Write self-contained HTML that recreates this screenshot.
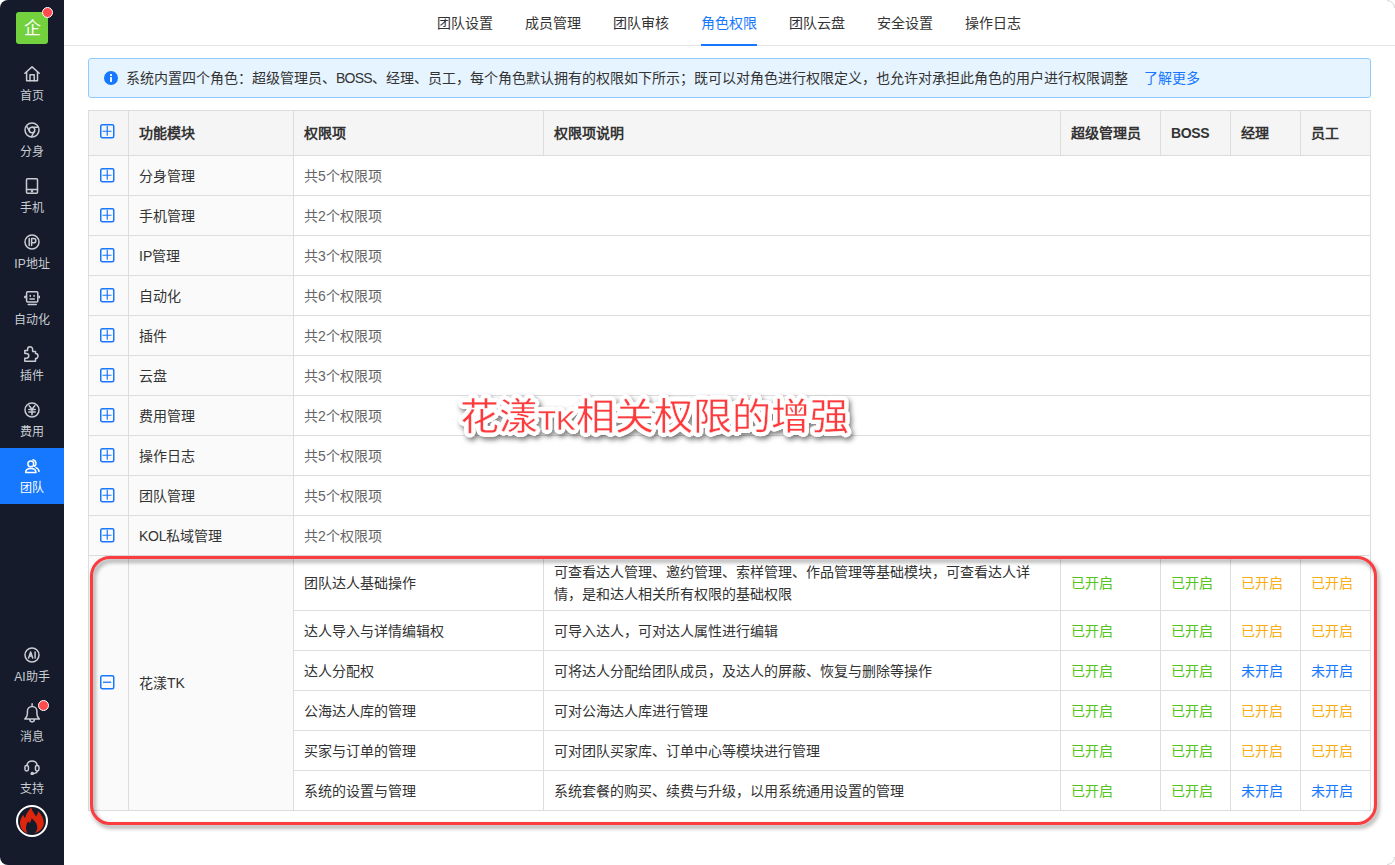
<!DOCTYPE html>
<html lang="zh-CN">
<head>
<meta charset="utf-8">
<style>
*{box-sizing:border-box;margin:0;padding:0}
html,body{width:1395px;height:865px;overflow:hidden;background:#fff}
body{font-family:"Liberation Sans",sans-serif;font-size:14px;color:#333;position:relative}
.abs{position:absolute}
/* sidebar */
#side{position:absolute;left:0;top:0;width:64px;height:865px;background:#151b2a;border-radius:8px 0 0 8px}
.logo{position:absolute;left:16px;top:12px;width:32px;height:32px;background:#72d13c;border-radius:3px;color:#fff;font-size:17px;line-height:34px;text-align:center}
.dot{position:absolute;width:11px;height:11px;border-radius:50%;background:#ff4d4f;border:1px solid #fff}
.item{position:absolute;left:0;width:64px;height:56px}
.item svg{position:absolute;left:24px;top:10px;width:16px;height:16px}
.item .lb{position:absolute;left:0;width:64px;top:32px;text-align:center;font-size:12px;line-height:16px;color:#c9cdd4}
.item.act{background:#1677ff}
.item.act .lb{color:#fff}
/* top nav */
#nav{position:absolute;left:64px;top:0;right:0;height:46px;border-bottom:1px solid #e8e8e8}
.tab{position:absolute;top:13px;font-size:14px;line-height:20px;color:#333;white-space:nowrap}
.tab.on{color:#1677ff}
.uline{position:absolute;left:701px;top:44px;width:56px;height:2px;background:#1677ff}
/* banner */
#banner{position:absolute;left:88px;top:58px;width:1283px;height:40px;background:#e6f4ff;border:1px solid #91caff;border-radius:3px}
.ico-i{position:absolute;left:104px;top:71px;width:14px;height:14px;border-radius:50%;background:#1677ff}
.ico-i:before{content:"";position:absolute;left:6.2px;top:3px;width:1.6px;height:1.6px;background:#e8f1ff}
.ico-i:after{content:"";position:absolute;left:6.2px;top:5.5px;width:1.6px;height:5.5px;background:#e8f1ff}
.btxt{position:absolute;left:126px;top:68px;line-height:20px;white-space:nowrap;color:#333}
.blink{position:absolute;left:1144px;top:68px;line-height:20px;color:#1677ff;white-space:nowrap}
/* table */
.hl{position:absolute;height:1px;background:#ddd}
.vl{position:absolute;width:1px;background:#ddd}
.bg{position:absolute}
.t{position:absolute;white-space:nowrap;line-height:20px}
.th{font-weight:bold;color:#333}
.mod{color:#333}
.cnt{color:#666}
.pi{color:#333}
.ds{color:#333}
.g{color:#52c41a}
.o{color:#faad14}
.b{color:#1677ff}
.ex{position:absolute;left:99px}
.exp{position:absolute;left:100px;width:15px;height:15px;border:1.5px solid #1677ff;border-radius:1.5px}
.exp:before{content:"";position:absolute;left:2px;top:5.25px;width:8px;height:1.5px;background:#1677ff}
.exp.plus:after{content:"";position:absolute;left:5.25px;top:2px;width:1.5px;height:8px;background:#1677ff}
/* annotation */
.annow{position:absolute;left:0;top:0;filter:drop-shadow(2px 3px 2.5px rgba(0,0,0,.5))}
.anno{position:absolute;left:460px;top:392px;font-size:39px;-webkit-text-stroke:0.35px #fff;line-height:54px;color:#fd3b3d;white-space:nowrap;font-weight:300;transform:scaleY(.95);transform-origin:0 0;text-shadow:4.00px 0.00px 0 #fff,3.86px 1.04px 0 #fff,3.46px 2.00px 0 #fff,2.83px 2.83px 0 #fff,2.00px 3.46px 0 #fff,1.04px 3.86px 0 #fff,0.00px 4.00px 0 #fff,-1.04px 3.86px 0 #fff,-2.00px 3.46px 0 #fff,-2.83px 2.83px 0 #fff,-3.46px 2.00px 0 #fff,-3.86px 1.04px 0 #fff,-4.00px 0.00px 0 #fff,-3.86px -1.04px 0 #fff,-3.46px -2.00px 0 #fff,-2.83px -2.83px 0 #fff,-2.00px -3.46px 0 #fff,-1.04px -3.86px 0 #fff,-0.00px -4.00px 0 #fff,1.04px -3.86px 0 #fff,2.00px -3.46px 0 #fff,2.83px -2.83px 0 #fff,3.46px -2.00px 0 #fff,3.86px -1.04px 0 #fff,2.50px 0.00px 0 #fff,2.17px 1.25px 0 #fff,1.25px 2.17px 0 #fff,0.00px 2.50px 0 #fff,-1.25px 2.17px 0 #fff,-2.17px 1.25px 0 #fff,-2.50px 0.00px 0 #fff,-2.17px -1.25px 0 #fff,-1.25px -2.17px 0 #fff,-0.00px -2.50px 0 #fff,1.25px -2.17px 0 #fff,2.17px -1.25px 0 #fff,0 0 1px #fff}
.anno .tk{font-size:29.5px;-webkit-text-stroke:0.3px #fff}
.redbox{position:absolute;left:90px;top:556px;width:1287px;height:269px;border:3px solid #fb3d3f;border-radius:20px;filter:drop-shadow(2px 3px 2px rgba(0,0,0,.42))}
</style>
</head>
<body>
<div id="side">
<div class="logo">企</div><div class="dot" style="left:42px;top:7px"></div>
<div class="item" style="top:56px"><svg viewBox="0 0 16 16" fill="none" stroke="#c9cdd4" stroke-width="1.5" stroke-linecap="round" stroke-linejoin="round"><path d="M0.9 7.3 8.05 0.9l7.15 6.4"/><path d="M2.6 6V14.7H13.5V6"/><path d="M6 14.7V8.8h4.2v5.9"/></svg><div class="lb">首页</div></div>
<div class="item" style="top:112px"><svg viewBox="0 0 16 16" fill="none" stroke="#c9cdd4" stroke-width="1.5" stroke-linecap="round" stroke-linejoin="round"><circle cx="8" cy="8" r="7"/><circle cx="8" cy="8" r="2.8"/><path d="M8 5.2h6.2M5.6 9.4 2.6 4.2M10.4 9.4 7.4 14.8"/></svg><div class="lb">分身</div></div>
<div class="item" style="top:168px"><svg viewBox="0 0 16 16" fill="none" stroke="#c9cdd4" stroke-width="1.5" stroke-linecap="round" stroke-linejoin="round"><rect x="2.5" y="0.8" width="11" height="14.4" rx="1"/><path d="M2.5 11.5h11"/><circle cx="8" cy="13.3" r=".5" fill="#c9cdd4"/></svg><div class="lb">手机</div></div>
<div class="item" style="top:224px"><svg viewBox="0 0 16 16" fill="none" stroke="#c9cdd4" stroke-width="1.5" stroke-linecap="round" stroke-linejoin="round"><circle cx="8" cy="8" r="7"/><path d="M5.2 4.6v6.8M7.6 11.4V4.6h2.1a2 2 0 0 1 0 4.2H7.6"/></svg><div class="lb">IP地址</div></div>
<div class="item" style="top:280px"><svg viewBox="0 0 16 16" fill="none" stroke="#c9cdd4" stroke-width="1.5" stroke-linecap="round" stroke-linejoin="round"><rect x="2.6" y="1.8" width="11.2" height="10.2" rx="1"/><path d="M1.3 6.2.6 7l.7.8M15.1 6.2l.7.8-.7.8M6.3 5.6v.6M10.1 5.6v.6M6 9h4.4M4.2 14.4h8"/></svg><div class="lb">自动化</div></div>
<div class="item" style="top:336px"><svg viewBox="0 0 16 16" fill="none" stroke="#c9cdd4" stroke-width="1.5" stroke-linecap="round" stroke-linejoin="round"><path d="M0.8 4.6H3.6V3.3A2.5 2.5 0 0 1 8.6 3.3V5.4H11.5V7.6A2.5 2.5 0 0 1 11.5 12.6V15.2H0.8V12.2H2.4A2.4 2.4 0 0 0 2.4 7.4H0.8Z"/></svg><div class="lb">插件</div></div>
<div class="item" style="top:392px"><svg viewBox="0 0 16 16" fill="none" stroke="#c9cdd4" stroke-width="1.5" stroke-linecap="round" stroke-linejoin="round"><circle cx="8" cy="8" r="7"/><path d="M5.2 3.8 8 7.2l2.8-3.4M8 7.2v5.5M4.8 7.5h6.4M4.8 9.9h6.4"/></svg><div class="lb">费用</div></div>
<div class="item act" style="top:448px"><svg viewBox="0 0 16 16" fill="none" stroke="#fff" stroke-width="1.5" stroke-linecap="round" stroke-linejoin="round"><circle cx="6.8" cy="5.9" r="2.9"/><path d="M1.6 14.6C1.6 12 3.9 10.4 6.8 10.4S12 12 12 14.6Z"/><path d="M9 1.8A3.6 3.6 0 0 1 10.6 8.2M11.9 9.6C13.6 10.3 15 11.6 15 13.6"/></svg><div class="lb">团队</div></div>
<div class="item" style="top:637px"><svg viewBox="0 0 16 16" fill="none" stroke="#c9cdd4" stroke-width="1.5" stroke-linecap="round" stroke-linejoin="round"><circle cx="8" cy="8" r="7"/><path d="M4.6 11 6.65 5 8.7 11M5.3 9.1h2.7M11.1 5v6" stroke-width="1.5"/></svg><div class="lb">AI助手</div></div>
<div class="item" style="top:697px"><svg style="top:6px;height:20px" viewBox="0 0 16 20" fill="none" stroke="#c9cdd4" stroke-width="1.5" stroke-linecap="round" stroke-linejoin="round"><path d="M8.1 0.8v2M0.8 16.1C2.6 14.4 3.4 13 3.4 10.8V8.2A4.75 4.75 0 0 1 12.9 8.2V10.8C12.9 13 13.6 14.4 15.4 16.1Z"/><path d="M5.8 16.6A2.3 2.3 0 0 0 10.4 16.6"/></svg><div class="lb">消息</div><div class="dot" style="left:37.5px;top:3px"></div></div>
<div class="item" style="top:749px"><svg viewBox="0 0 16 16" fill="none" stroke="#c9cdd4" stroke-width="1.5" stroke-linecap="round" stroke-linejoin="round"><path d="M2.9 6.4A5.2 5.2 0 0 1 13.2 6.4"/><rect x="0.95" y="6.45" width="3.5" height="5.5" rx="1.6"/><rect x="11.45" y="6.45" width="3.5" height="5.5" rx="1.6"/><path d="M13.4 12.2C13 13.9 11.3 14.6 8.6 14.6"/><circle cx="8.2" cy="14.6" r="1" fill="#c9cdd4"/></svg><div class="lb">支持</div></div>
<div class="abs" style="left:16px;top:805px;width:32px;height:32px;border:2px solid #fff;border-radius:50%;overflow:hidden"><svg viewBox="0 0 28 28" width="28" height="28" style="position:absolute;left:0;top:0"><path fill="#dc260e" d="M13.2 0.2C14 4 16.5 6.5 18 9.5C19.2 8 19.9 6 20.1 4.2C23.5 7.5 25.8 11.5 25.8 16C25.8 20.5 22 24.5 16.7 26.4C18.6 24.5 19.5 22 19.2 19.5C18.8 16 16.2 13.2 13.6 11.2C13.6 13 12.8 14.5 11.7 16C11.2 15.5 10.6 14.9 10.2 14.2C8.8 16.5 8 18.5 8 21C8 23 8.7 25 9.7 26.4C5 24.8 2 20.8 2 16C2 13 3.5 10 5.4 7.7C5.6 9 6.2 10.2 7.3 11C7.8 6.5 11 3.5 13.2 0.2Z"/></svg></div>
</div>
<div class="abs" style="left:64px;top:45px;width:1331px;height:1px;background:#e5e5e5"></div>
<div class="tab" style="left:437px">团队设置</div>
<div class="tab" style="left:525px">成员管理</div>
<div class="tab" style="left:613px">团队审核</div>
<div class="tab on" style="left:701px">角色权限</div>
<div class="tab" style="left:789px">团队云盘</div>
<div class="tab" style="left:877px">安全设置</div>
<div class="tab" style="left:965px">操作日志</div>
<div class="uline"></div>
<div id="banner"></div><div class="ico-i"></div>
<div class="btxt">系统内置四个角色：超级管理员、<span style="letter-spacing:-.8px">BOSS</span>、经理、员工，每个角色默认拥有的权限如下所示；既可以对角色进行权限定义，也允许对承担此角色的用户进行权限调整</div>
<div class="blink">了解更多</div>
<div class="bg" style="left:88px;top:110px;width:1282px;height:45px;background:#f5f5f5"></div>
<div class="bg" style="left:88px;top:155px;width:205px;height:655px;background:#fafafa"></div>
<div class="hl" style="left:88px;top:110px;width:1283px"></div>
<div class="hl" style="left:88px;top:155px;width:1283px"></div>
<div class="hl" style="left:88px;top:195px;width:1283px"></div>
<div class="hl" style="left:88px;top:235px;width:1283px"></div>
<div class="hl" style="left:88px;top:275px;width:1283px"></div>
<div class="hl" style="left:88px;top:315px;width:1283px"></div>
<div class="hl" style="left:88px;top:355px;width:1283px"></div>
<div class="hl" style="left:88px;top:395px;width:1283px"></div>
<div class="hl" style="left:88px;top:435px;width:1283px"></div>
<div class="hl" style="left:88px;top:475px;width:1283px"></div>
<div class="hl" style="left:88px;top:515px;width:1283px"></div>
<div class="hl" style="left:88px;top:555px;width:1283px"></div>
<div class="hl" style="left:293px;top:610px;width:1078px"></div>
<div class="hl" style="left:293px;top:650px;width:1078px"></div>
<div class="hl" style="left:293px;top:690px;width:1078px"></div>
<div class="hl" style="left:293px;top:730px;width:1078px"></div>
<div class="hl" style="left:293px;top:770px;width:1078px"></div>
<div class="hl" style="left:88px;top:810px;width:1283px"></div>
<div class="vl" style="left:88px;top:110px;height:701px"></div>
<div class="vl" style="left:128px;top:110px;height:701px"></div>
<div class="vl" style="left:293px;top:110px;height:701px"></div>
<div class="vl" style="left:1370px;top:110px;height:701px"></div>
<div class="vl" style="left:543px;top:110px;height:46px"></div>
<div class="vl" style="left:543px;top:555px;height:256px"></div>
<div class="vl" style="left:1060px;top:110px;height:46px"></div>
<div class="vl" style="left:1060px;top:555px;height:256px"></div>
<div class="vl" style="left:1160px;top:110px;height:46px"></div>
<div class="vl" style="left:1160px;top:555px;height:256px"></div>
<div class="vl" style="left:1230px;top:110px;height:46px"></div>
<div class="vl" style="left:1230px;top:555px;height:256px"></div>
<div class="vl" style="left:1300px;top:110px;height:46px"></div>
<div class="vl" style="left:1300px;top:555px;height:256px"></div>
<div class="t th" style="left:139px;top:123px">功能模块</div>
<div class="t th" style="left:304px;top:123px">权限项</div>
<div class="t th" style="left:554px;top:123px">权限项说明</div>
<div class="t th" style="left:1071px;top:123px">超级管理员</div>
<div class="t th" style="left:1171px;top:123px"><span style="letter-spacing:-.4px">BOSS</span></div>
<div class="t th" style="left:1241px;top:123px">经理</div>
<div class="t th" style="left:1311px;top:123px">员工</div>
<svg class="ex" style="top:123px" width="16" height="16" viewBox="0 0 16 16" fill="none" stroke="#1677ff"><rect x="1.75" y="1.75" width="13" height="13" rx="1.5" stroke-width="1.5"/><path d="M3.5 8.25h9M8.25 3v9.7" stroke-width="1.2"/></svg>
<svg class="ex" style="top:167px" width="16" height="16" viewBox="0 0 16 16" fill="none" stroke="#1677ff"><rect x="1.75" y="1.75" width="13" height="13" rx="1.5" stroke-width="1.5"/><path d="M3.5 8.25h9M8.25 3v9.7" stroke-width="1.2"/></svg>
<div class="t mod" style="left:139px;top:166px">分身管理</div>
<div class="t cnt" style="left:304px;top:166px">共5个权限项</div>
<svg class="ex" style="top:207px" width="16" height="16" viewBox="0 0 16 16" fill="none" stroke="#1677ff"><rect x="1.75" y="1.75" width="13" height="13" rx="1.5" stroke-width="1.5"/><path d="M3.5 8.25h9M8.25 3v9.7" stroke-width="1.2"/></svg>
<div class="t mod" style="left:139px;top:206px">手机管理</div>
<div class="t cnt" style="left:304px;top:206px">共2个权限项</div>
<svg class="ex" style="top:247px" width="16" height="16" viewBox="0 0 16 16" fill="none" stroke="#1677ff"><rect x="1.75" y="1.75" width="13" height="13" rx="1.5" stroke-width="1.5"/><path d="M3.5 8.25h9M8.25 3v9.7" stroke-width="1.2"/></svg>
<div class="t mod" style="left:139px;top:246px">IP管理</div>
<div class="t cnt" style="left:304px;top:246px">共3个权限项</div>
<svg class="ex" style="top:287px" width="16" height="16" viewBox="0 0 16 16" fill="none" stroke="#1677ff"><rect x="1.75" y="1.75" width="13" height="13" rx="1.5" stroke-width="1.5"/><path d="M3.5 8.25h9M8.25 3v9.7" stroke-width="1.2"/></svg>
<div class="t mod" style="left:139px;top:286px">自动化</div>
<div class="t cnt" style="left:304px;top:286px">共6个权限项</div>
<svg class="ex" style="top:327px" width="16" height="16" viewBox="0 0 16 16" fill="none" stroke="#1677ff"><rect x="1.75" y="1.75" width="13" height="13" rx="1.5" stroke-width="1.5"/><path d="M3.5 8.25h9M8.25 3v9.7" stroke-width="1.2"/></svg>
<div class="t mod" style="left:139px;top:326px">插件</div>
<div class="t cnt" style="left:304px;top:326px">共2个权限项</div>
<svg class="ex" style="top:367px" width="16" height="16" viewBox="0 0 16 16" fill="none" stroke="#1677ff"><rect x="1.75" y="1.75" width="13" height="13" rx="1.5" stroke-width="1.5"/><path d="M3.5 8.25h9M8.25 3v9.7" stroke-width="1.2"/></svg>
<div class="t mod" style="left:139px;top:366px">云盘</div>
<div class="t cnt" style="left:304px;top:366px">共3个权限项</div>
<svg class="ex" style="top:407px" width="16" height="16" viewBox="0 0 16 16" fill="none" stroke="#1677ff"><rect x="1.75" y="1.75" width="13" height="13" rx="1.5" stroke-width="1.5"/><path d="M3.5 8.25h9M8.25 3v9.7" stroke-width="1.2"/></svg>
<div class="t mod" style="left:139px;top:406px">费用管理</div>
<div class="t cnt" style="left:304px;top:406px">共2个权限项</div>
<svg class="ex" style="top:447px" width="16" height="16" viewBox="0 0 16 16" fill="none" stroke="#1677ff"><rect x="1.75" y="1.75" width="13" height="13" rx="1.5" stroke-width="1.5"/><path d="M3.5 8.25h9M8.25 3v9.7" stroke-width="1.2"/></svg>
<div class="t mod" style="left:139px;top:446px">操作日志</div>
<div class="t cnt" style="left:304px;top:446px">共5个权限项</div>
<svg class="ex" style="top:487px" width="16" height="16" viewBox="0 0 16 16" fill="none" stroke="#1677ff"><rect x="1.75" y="1.75" width="13" height="13" rx="1.5" stroke-width="1.5"/><path d="M3.5 8.25h9M8.25 3v9.7" stroke-width="1.2"/></svg>
<div class="t mod" style="left:139px;top:486px">团队管理</div>
<div class="t cnt" style="left:304px;top:486px">共5个权限项</div>
<svg class="ex" style="top:527px" width="16" height="16" viewBox="0 0 16 16" fill="none" stroke="#1677ff"><rect x="1.75" y="1.75" width="13" height="13" rx="1.5" stroke-width="1.5"/><path d="M3.5 8.25h9M8.25 3v9.7" stroke-width="1.2"/></svg>
<div class="t mod" style="left:139px;top:526px"><span style="letter-spacing:-.3px">KOL</span>私域管理</div>
<div class="t cnt" style="left:304px;top:526px">共2个权限项</div>
<svg class="ex" style="top:674px" width="16" height="16" viewBox="0 0 16 16" fill="none" stroke="#1677ff"><rect x="1.75" y="1.75" width="13" height="13" rx="1.5" stroke-width="1.5"/><path d="M4 8.25h8.2" stroke-width="1.3"/></svg>
<div class="t mod" style="left:139px;top:673px">花漾TK</div>
<div class="t pi" style="left:304px;top:573px">团队达人基础操作</div>
<div class="t ds" style="left:554px;top:561px;line-height:22px">可查看达人管理、邀约管理、索样管理、作品管理等基础模块，可查看达人详<br>情，是和达人相关所有权限的基础权限</div>
<div class="t g" style="left:1071px;top:573px">已开启</div>
<div class="t g" style="left:1171px;top:573px">已开启</div>
<div class="t o" style="left:1241px;top:573px">已开启</div>
<div class="t o" style="left:1311px;top:573px">已开启</div>
<div class="t pi" style="left:304px;top:621px">达人导入与详情编辑权</div>
<div class="t ds" style="left:554px;top:621px">可导入达人，可对达人属性进行编辑</div>
<div class="t g" style="left:1071px;top:621px">已开启</div>
<div class="t g" style="left:1171px;top:621px">已开启</div>
<div class="t o" style="left:1241px;top:621px">已开启</div>
<div class="t o" style="left:1311px;top:621px">已开启</div>
<div class="t pi" style="left:304px;top:661px">达人分配权</div>
<div class="t ds" style="left:554px;top:661px">可将达人分配给团队成员，及达人的屏蔽、恢复与删除等操作</div>
<div class="t g" style="left:1071px;top:661px">已开启</div>
<div class="t g" style="left:1171px;top:661px">已开启</div>
<div class="t b" style="left:1241px;top:661px">未开启</div>
<div class="t b" style="left:1311px;top:661px">未开启</div>
<div class="t pi" style="left:304px;top:701px">公海达人库的管理</div>
<div class="t ds" style="left:554px;top:701px">可对公海达人库进行管理</div>
<div class="t g" style="left:1071px;top:701px">已开启</div>
<div class="t g" style="left:1171px;top:701px">已开启</div>
<div class="t o" style="left:1241px;top:701px">已开启</div>
<div class="t o" style="left:1311px;top:701px">已开启</div>
<div class="t pi" style="left:304px;top:741px">买家与订单的管理</div>
<div class="t ds" style="left:554px;top:741px">可对团队买家库、订单中心等模块进行管理</div>
<div class="t g" style="left:1071px;top:741px">已开启</div>
<div class="t g" style="left:1171px;top:741px">已开启</div>
<div class="t o" style="left:1241px;top:741px">已开启</div>
<div class="t o" style="left:1311px;top:741px">已开启</div>
<div class="t pi" style="left:304px;top:781px">系统的设置与管理</div>
<div class="t ds" style="left:554px;top:781px">系统套餐的购买、续费与升级，以用系统通用设置的管理</div>
<div class="t g" style="left:1071px;top:781px">已开启</div>
<div class="t g" style="left:1171px;top:781px">已开启</div>
<div class="t b" style="left:1241px;top:781px">未开启</div>
<div class="t b" style="left:1311px;top:781px">未开启</div>
<svg class="abs" style="left:1379px;top:0" width="16" height="16"><path d="M8 0.5A7.5 7.5 0 0 1 15.5 8" fill="none" stroke="#d6d6d6" stroke-width="1"/></svg>
<svg class="abs" style="left:1379px;top:849px" width="16" height="16"><path d="M15.5 8A7.5 7.5 0 0 1 8 15.5" fill="none" stroke="#d6d6d6" stroke-width="1"/></svg>
<div class="redbox"></div>
<div class="annow"><div class="anno">花漾<span class="tk">TK</span>相关权限的增强</div></div>
</body>
</html>
